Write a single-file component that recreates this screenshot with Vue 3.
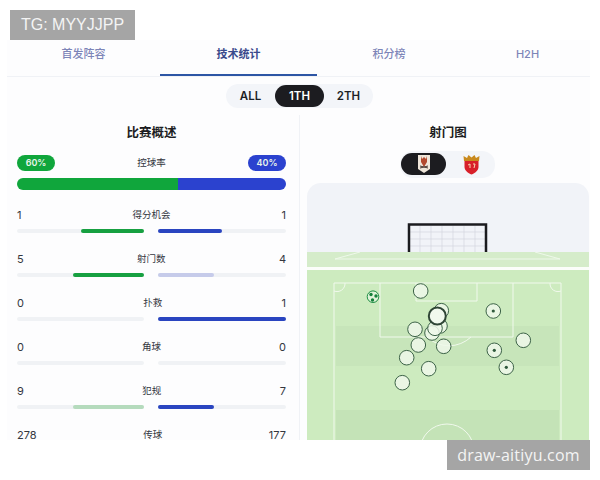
<script setup>
const tabs = [
  { label: "首发阵容" },
  { label: "技术统计", active: true },
  { label: "积分榜" },
  { label: "H2H" }
];

const periods = [
  { label: "ALL" },
  { label: "1TH", active: true },
  { label: "2TH" }
];

const stats = [
  { label: "得分机会", home: "1", away: "1", homeBar: 50, awayBar: 50 },
  { label: "射门数", home: "5", away: "4", homeBar: 56, awayBar: 44, awayLight: true },
  { label: "扑救", home: "0", away: "1", homeBar: 0, awayBar: 100 },
  { label: "角球", home: "0", away: "0", homeBar: 0, awayBar: 0 },
  { label: "犯规", home: "9", away: "7", homeBar: 56, awayBar: 44, homeLight: true },
  { label: "传球", home: "278", away: "177", homeBar: 61, awayBar: 39 }
];

const shots = [
  { x: 420.7, y: 291 },
  { x: 441.3, y: 310.7 },
  { x: 440, y: 326 },
  { x: 432, y: 333 },
  { x: 435, y: 328.3 },
  { x: 415, y: 329.3 },
  { x: 418.3, y: 345 },
  { x: 443.7, y: 346.3 },
  { x: 406.7, y: 357.7 },
  { x: 428.7, y: 368.7 },
  { x: 402.3, y: 382.7 },
  { x: 523.3, y: 340.3 },
  { x: 493.3, y: 311, dot: true },
  { x: 494.3, y: 350.3, dot: true },
  { x: 506.3, y: 367.3, dot: true }
];

const netX = [420, 431, 442, 453, 464, 475];
const netY = [232, 239, 246];
</script>

<template>
  <div class="page">
    <div class="board">
      <nav class="tabs">
        <span
          v-for="tab in tabs"
          :key="tab.label"
          class="tab"
          :class="{ 'tab--active': tab.active }"
        >
          {{ tab.label }}
        </span>
      </nav>

      <div class="periods">
        <span
          v-for="period in periods"
          :key="period.label"
          class="period"
          :class="{ 'period--active': period.active }"
        >
          {{ period.label }}
        </span>
      </div>

      <div class="columns">
        <section class="overview">
          <h2 class="panel-title">比赛概述</h2>

          <div class="possession">
            <span class="pill pill--green">60%</span>
            <span class="stat-label">控球率</span>
            <span class="pill pill--blue">40%</span>
          </div>
          <div class="possession-bar">
            <div class="possession-bar__home"></div>
            <div class="possession-bar__away"></div>
          </div>

          <div v-for="stat in stats" :key="stat.label" class="stat">
            <div class="stat__values">
              <span>{{ stat.home }}</span>
              <span class="stat-label">{{ stat.label }}</span>
              <span>{{ stat.away }}</span>
            </div>
            <div class="stat__bars">
              <div class="track track--home">
                <div
                  class="fill fill--home"
                  :class="{ 'fill--home-light': stat.homeLight }"
                  :style="{ width: stat.homeBar + '%' }"
                ></div>
              </div>
              <div class="track">
                <div
                  class="fill fill--away"
                  :class="{ 'fill--away-light': stat.awayLight }"
                  :style="{ width: stat.awayBar + '%' }"
                ></div>
              </div>
            </div>
          </div>
        </section>

        <section class="shots">
          <h2 class="panel-title">射门图</h2>

          <div class="teams">
            <span class="team team--active">
              <svg width="14" height="20" viewBox="0 0 14 20">
                <path d="M1 1h12v14l-6 4-6-4z" fill="#efe6da" />
                <path d="M4 2l1 3 2-2 2 2 1-3v6l-3 5-3-5z" fill="#b2492f" />
                <path d="M3 14l8-2M3 12l8 2" stroke="#4a3a34" stroke-width="1" />
              </svg>
            </span>
            <span class="team">
              <svg width="17" height="21" viewBox="0 0 17 21">
                <path d="M1 7L0.500 2 4 4 5.500 1 8.500 3.500 11.500 1 13 4 16.500 2 16 7z" fill="#c98a1e" />
                <path d="M1.500 7h14v6c0 3.500-3.500 6-7 7.500-3.500-1.500-7-4-7-7.500z" fill="#d8202a" />
                <path d="M5 11l2-1v4M10 10h2l-1 4" stroke="#f6d9b0" stroke-width="1" fill="none" />
              </svg>
            </span>
          </div>

          <svg class="pitch" viewBox="307 183 282 257" role="img" aria-label="射门图">
            <path d="M307 252v-55a14 14 0 0 1 14-14h254a14 14 0 0 1 14 14v55z" fill="#f1f3f8" />
            <rect x="307" y="252" width="282" height="15" fill="#d5ecca" />
            <rect x="307" y="270" width="282" height="170" fill="#cdebbf" />
            <rect x="336" y="326" width="223" height="40" fill="#c7e5ba" />
            <rect x="336" y="410" width="223" height="30" fill="#c4e3b7" />
            <rect x="307" y="267" width="282" height="3" fill="#fbfdfa" />

            <path d="M335 259l25-7M560 259l-25-7M335 259h225" stroke="#eef8ea" stroke-width="1" fill="none" />

            <g stroke="#d3d6e0" stroke-width="0.7">
              <line v-for="x in netX" :key="x" :x1="x" y1="226" :x2="x" y2="252" />
              <line v-for="y in netY" :key="y" x1="410" :y1="y" x2="485" :y2="y" />
            </g>
            <path d="M409 252v-27.500h77V252" fill="none" stroke="#1b1b1f" stroke-width="2.500" />

            <g stroke="#f1f9ed" stroke-width="1" fill="none">
              <path d="M334 440V283h227v157" />
              <path d="M380 283v54h133v-54" />
              <path d="M416 283v18h61v-18" />
              <path d="M427 337a32 32 0 0 0 44 0" />
              <path d="M334 291a8 8 0 0 0 11-8M561 291a8 8 0 0 1-11-8" />
              <circle cx="447" cy="451" r="27" />
            </g>

            <g v-for="(shot, index) in shots" :key="index">
              <circle :cx="shot.x" :cy="shot.y" r="7.300" fill="#eef8ea" fill-opacity="0.85" stroke="#3d6348" stroke-width="1" />
              <circle v-if="shot.dot" :cx="shot.x" :cy="shot.y" r="1.600" fill="#2f5a3c" />
            </g>
            <circle cx="437.300" cy="316" r="8.500" fill="#f1f9ee" stroke="#2f4536" stroke-width="2" />

            <circle cx="373" cy="296.700" r="5.800" fill="#dff2d8" stroke="#1f8f45" stroke-width="1" />
            <circle cx="371" cy="294.500" r="1.700" fill="#14803a" />
            <circle cx="376" cy="296" r="1.700" fill="#14803a" />
            <circle cx="372.500" cy="300" r="1.700" fill="#14803a" />
          </svg>
        </section>
      </div>
    </div>

    <div class="mark mark--top">TG: MYYJJPP</div>
    <div class="mark mark--bottom">draw-aitiyu.com</div>
  </div>
</template>

<style>
body {
  background: #ffffff;
}
</style>

<style scoped>
.page {
  position: relative;
  width: 600px;
  height: 480px;
  padding: 40px 0 40px 7px;
  box-sizing: border-box;
  overflow: hidden;
  background: #ffffff;
  font-family: Inter, "Noto Sans CJK SC", sans-serif;
}

.board {
  width: 583px;
  height: 400px;
  overflow: hidden;
  background: #fdfdfe;
}

.tabs {
  display: grid;
  grid-template-columns: 153px 157px 144px 133px;
  height: 37px;
  box-sizing: border-box;
  border-bottom: 1px solid #f0f2f6;
}

.tab {
  height: 36px;
  box-sizing: border-box;
  padding-top: 6px;
  text-align: center;
  font-size: 11px;
  line-height: 16px;
  font-weight: 500;
  color: #7d85b8;
}

.tab--active {
  border-bottom: 2px solid #2d56a5;
  color: #3a4a8c;
  font-weight: 700;
}

.periods {
  display: flex;
  width: 147px;
  height: 24px;
  margin: 7px 0 0 219px;
  padding: 1px 0;
  box-sizing: border-box;
  border-radius: 12px;
  background: #f3f5f9;
}

.period {
  flex: 0 0 49px;
  border-radius: 11px;
  text-align: center;
  font-size: 11.500px;
  line-height: 22px;
  font-weight: 600;
  color: #1d1f26;
}

.period--active {
  background: #1c1c20;
  color: #ffffff;
}

.columns {
  display: flex;
  margin-top: 7px;
}

.overview {
  width: 293px;
  height: 325px;
  padding: 10px 13px 0 10px;
  box-sizing: border-box;
  border-right: 1px solid #f0f2f6;
}

.shots {
  flex: 1;
  padding: 10px 1px 0 7px;
  box-sizing: border-box;
  min-width: 0;
}

.panel-title {
  margin: 0;
  text-align: center;
  font-size: 12.500px;
  line-height: 16px;
  font-weight: 700;
  color: #1c1d22;
}

.possession {
  display: flex;
  align-items: center;
  justify-content: space-between;
  margin-top: 14px;
}

.pill {
  width: 38px;
  height: 16px;
  border-radius: 8px;
  text-align: center;
  font-size: 9px;
  line-height: 16px;
  font-weight: 600;
  color: #e8f4ea;
}

.pill--green {
  background: #10a63c;
}

.pill--blue {
  background: #2b42cf;
}

.stat-label {
  font-size: 9.500px;
  line-height: 10px;
  color: #33363f;
}

.possession-bar {
  display: flex;
  height: 12px;
  margin: 7px 0 20px;
  border-radius: 6px;
  overflow: hidden;
}

.possession-bar__home {
  width: 60%;
  background: #10a63c;
}

.possession-bar__away {
  width: 40%;
  background: #2b42cf;
}

.stat {
  padding-bottom: 21px;
}

.stat__values {
  display: flex;
  justify-content: space-between;
  height: 10px;
  font-size: 11px;
  line-height: 10px;
  color: #34373f;
}

.stat__bars {
  display: grid;
  grid-template-columns: 127px 128px;
  justify-content: space-between;
  margin-top: 9px;
}

.track {
  height: 4px;
  border-radius: 2px;
  background: #f0f2f5;
}

.track--home {
  display: flex;
  justify-content: flex-end;
}

.fill {
  height: 100%;
  border-radius: 2px;
}

.fill--home {
  background: #17a041;
}

.fill--home-light {
  background: #b5dbbd;
}

.fill--away {
  background: #2a45c0;
}

.fill--away-light {
  background: #c6cbea;
}

.teams {
  display: flex;
  width: 95px;
  height: 27px;
  margin: 10px 0 0 93px;
  padding: 2px 1px;
  box-sizing: border-box;
  border-radius: 13px;
  background: #f3f5f9;
}

.team {
  display: flex;
  align-items: center;
  justify-content: center;
  width: 45px;
  height: 22px;
  border-radius: 11px;
}

.team + .team {
  margin-left: 3px;
}

.team--active {
  background: #1c1c20;
}

.pitch {
  display: block;
  width: 282px;
  height: 257px;
  margin-top: 5px;
}

.mark {
  position: absolute;
  display: flex;
  align-items: center;
  justify-content: center;
  height: 30px;
  background: #a5a5a5;
  color: #f4f4f4;
}

.mark--top {
  top: 10px;
  left: 10px;
  width: 125px;
  font-family: "Liberation Sans", sans-serif;
  font-size: 16px;
}

.mark--bottom {
  top: 440px;
  left: 447px;
  width: 143px;
  font-family: "Open Sans", sans-serif;
  font-size: 16px;
  letter-spacing: 0.200px;
}
</style>
